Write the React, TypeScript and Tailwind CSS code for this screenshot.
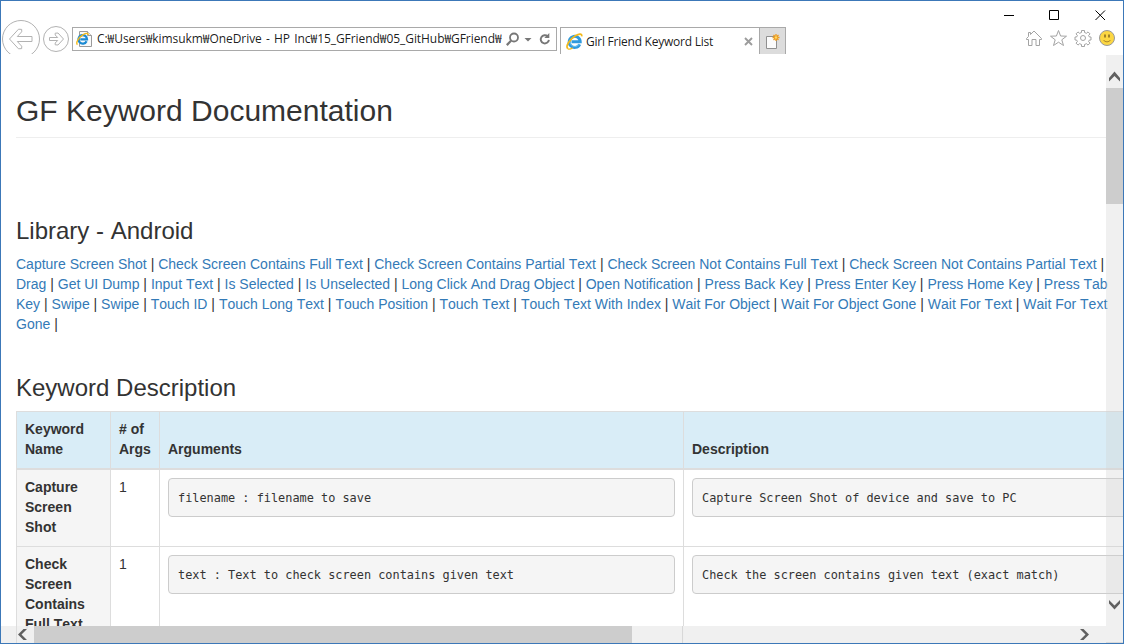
import React from "react";

const linkLines: string[][] = [
  ["Capture Screen Shot", "Check Screen Contains Full Text", "Check Screen Contains Partial Text", "Check Screen Not Contains Full Text", "Check Screen Not Contains Partial Text", ""],
  ["Drag", "Get UI Dump", "Input Text", "Is Selected", "Is Unselected", "Long Click And Drag Object", "Open Notification", "Press Back Key", "Press Enter Key", "Press Home Key", "Press Tab"],
  ["Key", "Swipe", "Swipe", "Touch ID", "Touch Long Text", "Touch Position", "Touch Text", "Touch Text With Index", "Wait For Object", "Wait For Object Gone", "Wait For Text", "Wait For Text"],
  ["Gone", ""],
];

const rows = [
  { name: ["Capture", "Screen", "Shot"], count: 1, args: "filename : filename to save", desc: "Capture Screen Shot of device and save to PC" },
  { name: ["Check", "Screen", "Contains", "Full Text"], count: 1, args: "text : Text to check screen contains given text", desc: "Check the screen contains given text (exact match)" },
];

function IeLogo({ size }: { size: number }) {
  return (
    <svg width={size} height={size} viewBox="0 0 16 16" fill="none">
      <path d="M12.9 10.6A5.2 5.2 0 1 1 13.4 8.3H5.2" stroke="#2f9ade" strokeWidth="2.8" />
      <path d="M12.2 10.9A4.8 4.8 0 0 1 3.6 8" stroke="#6cc4f1" strokeWidth="0.9" />
      <path d="M1.8 14.8C-.8 12.6 3.2 6 8.8 2.6c3.6-2.2 6.6-2.1 5.9.6" stroke="#f3b91b" strokeWidth="1.6" />
      <path d="M1.8 14.8c1.2.8 3.2 0 4.4-.9" stroke="#f3b91b" strokeWidth="1.3" />
    </svg>
  );
}

function NavButtons() {
  return (
    <svg className="shrink-0" width="70" height="34" viewBox="1 20 70 34" fill="none" stroke="#b2b2b2">
      <circle cx="21" cy="39" r="18.5" />
      <path d="M9.5 39l9-9.8 3.2.2v2.4l-4.4 4.7H32v5H17.3l4.4 4.7v2.4l-3.2.2z" strokeLinejoin="round" />
      <circle cx="56" cy="39" r="12.5" />
      <path d="M63.5 39l-5.5-6-2.8.2v1.8l2.5 2.5h-8.2v3h8.2l-2.5 2.5v1.8l2.8.2z" strokeLinejoin="round" />
    </svg>
  );
}

function AddressBar() {
  return (
    <div className="mt-[7px] ml-[1px] flex h-[24px] w-[485px] shrink-0 items-center border border-[#a9a9a9] bg-white">
      <svg className="ml-[3px] shrink-0" width="17" height="18" viewBox="0 0 17 18" fill="none">
        <path d="M3.5 1.5h8l4 4v11h-12z" fill="#fafafa" stroke="#9a9a9a" />
        <path d="M11.5 1.5v4h4" fill="#eee" stroke="#9a9a9a" />
        <g transform="translate(0 2.5) scale(.82)">
          <path d="M12.9 10.6A5.2 5.2 0 1 1 13.4 8.3H5.2" stroke="#1b8ad3" strokeWidth="2.8" />
          <path d="M1.8 14.8C-.8 12.6 3.2 6 8.8 2.6c3.6-2.2 6.6-2.1 5.9.6" stroke="#f3b91b" strokeWidth="1.7" />
        </g>
      </svg>
      <div className="ml-[4px] w-[405px] shrink-0 overflow-hidden font-['Open_Sans','Noto_Sans_CJK_KR',sans-serif] text-[12px] leading-[18px] tracking-[-0.06px] [word-spacing:1.2px] whitespace-pre text-black/90">
        C:₩Users₩kimsukm₩OneDrive - HP Inc₩15_GFriend₩05_GitHub₩GFriend₩
      </div>
      <svg className="ml-[3px] shrink-0" width="46" height="16" viewBox="505 31 46 16" fill="none" stroke="#777">
        <circle cx="514" cy="37.5" r="4" strokeWidth="1.8" />
        <path d="M511 40.8l-4.2 4.3" strokeWidth="2.3" />
        <path d="M524.5 38h7l-3.5 3.6z" fill="#777" stroke="none" />
        <path d="M547.7 36.4a4.1 4.1 0 1 0 1.2 3.4" strokeWidth="1.9" />
        <path d="M549.3 33v5h-5z" fill="#777" stroke="none" />
      </svg>
    </div>
  );
}

function Tabs() {
  return (
    <div className="mt-[7px] ml-[3px] flex h-[27px] shrink-0">
      <div className="flex w-[199px] items-center border-t border-l border-[#a9a9a9] bg-white pl-[5px]">
        <IeLogo size={17} />
        <span className="ml-[3px] w-[154px] pt-[1px] font-['Open_Sans',sans-serif] text-[12px] leading-[18px] tracking-[-0.24px] whitespace-nowrap text-black/90">Girl Friend Keyword List</span>
        <svg className="ml-[4px]" width="9" height="9" viewBox="0 0 9 9" stroke="#9c9c9c" strokeWidth="1.9">
          <path d="M1 1l7 7M8 1l-7 7" />
        </svg>
      </div>
      <div className="flex w-[27px] justify-center border border-b-0 border-[#a9a9a9] bg-[#dcdcdc] pt-[5px]">
        <svg width="16" height="17" viewBox="765 32 16 17" fill="none">
          <path d="M766.5 35.5h10v12h-10z" fill="#fbfbfb" stroke="#8f8f8f" />
          <path d="M776 33v7M772.5 36.5h7M773.5 34l5 5M778.5 34l-5 5" stroke="#ee9b1f" strokeWidth="1.3" />
          <circle cx="776" cy="36.5" r="1.2" fill="#ffd95c" />
        </svg>
      </div>
    </div>
  );
}

function WindowControls() {
  return (
    <svg className="ml-auto shrink-0" width="130" height="54" viewBox="993 1 130 54" fill="none">
      <path d="M1004 15.5h10M1049.5 10.5h9v9h-9zM1095.5 10.5l9.5 9.5M1105 10.5l-9.5 9.5" stroke="#000" />
      <g stroke="#a3a3a3" strokeLinejoin="round">
        <path d="M1026.5 38.5l2-2v-4h2v2l3.5-3.5 7.5 7.5v1h-2v6h-3.500v-6h-4v6h-3.500v-6h-2z" />
        <path d="M1058.500 30.500l2.100 5.500 5.900.2-4.700 3.600 1.700 5.700-5-3.300-5 3.300 1.700-5.700-4.700-3.600 5.900-.2z" />
        <path d="M1081.500 32.500v-2h3v2l2 .8 1.500-1.400 2 2-1.400 1.500.8 1.600h1.600v3h-1.600l-.8 1.600 1.400 1.500-2 2-1.500-1.400-2 .8v2h-3v-2l-2-.8-1.500 1.400-2-2 1.400-1.500-.8-1.600h-1.600v-3h1.600l.8-1.600-1.400-1.500 2-2 1.500 1.400z" />
        <circle cx="1083" cy="38" r="2.5" />
      </g>
      <circle cx="1107" cy="38" r="7.500" fill="#fcd743" stroke="#999" />
      <path d="M1105 34.500v3M1109 34.500v3" stroke="#8a6f22" strokeWidth="1.600" />
      <path d="M1103.500 40c1.600 2.400 5.400 2.400 7 0" stroke="#a9872a" />
    </svg>
  );
}

const mono = "rounded-[4px] border border-[#ccc] bg-[#f5f5f5] h-[39px] pl-[9px] pt-[10px] font-['DejaVu_Sans_Mono',monospace] text-[11.88px] leading-[19px] whitespace-pre";

export default function App() {
  return (
    <div className="relative flex h-[644px] w-[1124px] flex-col overflow-hidden border border-[#3c78b8] bg-white font-['Liberation_Sans',Arial,sans-serif] text-[14px] leading-[20px] text-[#333] [font-kerning:none]">
      <header className="flex h-[54px] shrink-0">
        <div className="flex pt-[19px]">
          <NavButtons />
          <AddressBar />
          <Tabs />
        </div>
        <WindowControls />
      </header>

      <main className="min-h-0 flex-1 overflow-hidden pl-[15px]">
        <h1 className="mt-[39px] h-[44px] w-[1092px] border-b border-[#eee] text-[30px] leading-[33px]">GF Keyword Documentation</h1>
        <h2 className="mt-[80px] text-[24px] leading-[26px]">Library - Android</h2>
        <div className="mt-[10px] w-[1107px] whitespace-nowrap">
          {linkLines.map((line, i) => (
            <div key={i}>
              {line.map((t, j) => (
                <React.Fragment key={j}>
                  {j > 0 && " | "}
                  {t && <a className="text-[#337ab7]">{t}</a>}
                </React.Fragment>
              ))}
            </div>
          ))}
        </div>
        <h2 className="mt-[41px] text-[24px] leading-[26px]">Keyword Description</h2>
        <div className="mt-[10px] w-[1300px]">
          <div className="flex h-[59px] items-stretch border-t border-b-2 border-[#ddd] bg-[#d9edf7] font-bold">
            <div className="flex w-[94px] items-end border-l border-[#ddd] pb-[9px] pl-[8px]"><span>Keyword<br />Name</span></div>
            <div className="flex w-[49px] items-end border-l border-[#ddd] pb-[9px] pl-[8px]"><span># of<br />Args</span></div>
            <div className="flex w-[524px] items-end border-l border-[#ddd] pb-[9px] pl-[8px]">Arguments</div>
            <div className="flex flex-1 items-end border-l border-[#ddd] pb-[9px] pl-[8px]">Description</div>
          </div>
          {rows.map((r) => (
            <div key={r.args} className="flex min-h-[77px] border-b border-[#ddd]">
              <div className="w-[94px] border-l border-[#ddd] bg-[#f5f5f5] pt-[7px] pb-[8px] pl-[8px] font-bold">
                {r.name.map((n) => <div key={n}>{n}</div>)}
              </div>
              <div className="w-[49px] border-l border-[#ddd] pt-[7px] pl-[8px]">{r.count}</div>
              <div className="w-[524px] border-l border-[#ddd] px-[8px] pt-[8px]"><pre className={mono}>{r.args}</pre></div>
              <div className="flex-1 border-l border-[#ddd] px-[8px] pt-[8px]"><pre className={mono}>{r.desc}</pre></div>
            </div>
          ))}
        </div>
      </main>

      <div className="absolute top-[54px] right-0 flex h-[588px] w-[17px] flex-col bg-[#d0d0d0]/33">
        <svg width="17" height="33" viewBox="1106 55 17 33"><path d="M1109 78v3.5l5.5-5.5 5.5 5.5V78l-5.5-6.5z" fill="#606060" /></svg>
        <div className="h-[116px] bg-[#cdcdcd]" />
        <svg className="mt-auto mb-[29px]" width="17" height="17" viewBox="1106 597 17 17"><path d="M1109 600v3.5l5.5 6 5.5-6V600l-5.5 5.5z" fill="#606060" /></svg>
      </div>
      <div className="absolute bottom-0 left-0 flex h-[17px] w-[1105px] bg-[#efefef]/95">
        <svg width="33" height="17" viewBox="1 626 33 17"><path d="M16.5 626v17" stroke="#ddd" /><path d="M27 629h-3.5l-5.5 5.5 5.5 5.5H27l-5.5-5.5z" fill="#606060" /></svg>
        <div className="w-[598px] bg-[#cdcdcd]" />
        <div className="w-[51px] border-r border-[#d8d8d8]" />
        <svg className="mr-[13px] ml-auto" width="17" height="17" viewBox="1076 626 17 17"><path d="M1080 629h3.5l5.5 5.5-5.5 5.5H1080l5.5-5.5z" fill="#606060" /></svg>
      </div>
    </div>
  );
}
